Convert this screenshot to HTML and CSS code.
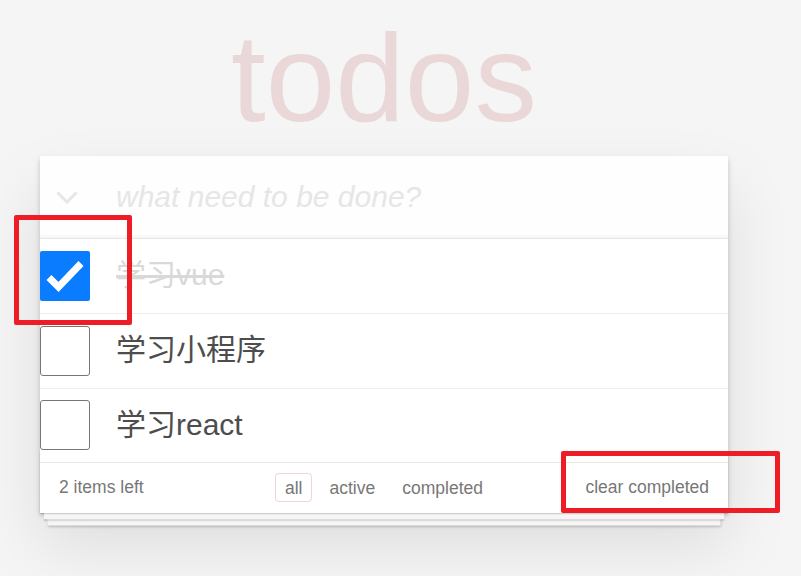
FILE: index.html
```html
<!DOCTYPE html>
<html lang="zh-CN">
<head>
<meta charset="utf-8">
<title>todos</title>
<link rel="stylesheet" href="styles.css">
</head>
<body>
  <h1 class="title">todos</h1>
  <section class="todoapp">
    <header class="header">
      <svg class="toggle-all" width="22" height="13" viewBox="0 0 22 13"><polyline points="1.5,1.5 11,11 20.5,1.5" fill="none" stroke="#e6e6e6" stroke-width="3"/></svg>
      <div class="new-todo">what need to be done?</div>
    </header>
    <ul class="todo-list">
      <li class="todo">
        <span class="check checked">
          <svg width="50" height="50" viewBox="0 0 50 50"><polyline points="9,26.5 18.5,36 41,12.5" fill="none" stroke="#fff" stroke-width="7"/></svg>
        </span>
        <span class="label done">学习vue</span>
      </li>
      <li class="todo">
        <span class="check"></span>
        <span class="label">学习小程序</span>
      </li>
      <li class="todo last">
        <span class="check"></span>
        <span class="label">学习react</span>
      </li>
    </ul>
    <footer class="footer">
      <span class="count">2 items left</span>
      <ul class="filters">
        <li><a class="filter selected">all</a></li>
        <li><a class="filter">active</a></li>
        <li><a class="filter">completed</a></li>
      </ul>
      <span class="clear">clear completed</span>
    </footer>
  </section>
  <div class="mark mark-check"></div>
  <div class="mark mark-clear"></div>
</body>
</html>
```
FILE: styles.css
```css
* { box-sizing: border-box; }
html, body { margin: 0; padding: 0; }
body {
  background: #f5f5f5;
  font-family: "Liberation Sans", Arial, "Noto Sans CJK SC", sans-serif;
  color: #4d4d4d;
  height: 576px;
  overflow: hidden;
}
.title {
  width: 688px;
  margin: 15px 0 0 40px;
  font-size: 125px;
  line-height: 125px;
  font-weight: 400;
  text-align: center;
  color: rgba(175, 47, 47, 0.15);
}
.todoapp {
  position: relative;
  width: 688px;
  margin: 16px 0 0 40px;
  background: #fff;
  box-shadow: 0 2.5px 5px 0 rgba(0, 0, 0, 0.2), 0 31px 62px 0 rgba(0, 0, 0, 0.1);
}
.header {
  display: flex;
  align-items: center;
  height: 82px;
  padding-left: 16px;
  background: rgba(0, 0, 0, 0.003);
  box-shadow: inset 0 -2.5px 1.25px rgba(0, 0, 0, 0.03);
}
.toggle-all { display: block; flex: none; }
.new-todo {
  margin-left: 38px;
  font-size: 30px;
  font-style: italic;
  color: #e6e6e6;
}
.todo-list {
  list-style: none;
  margin: 0;
  padding: 0;
  border-top: 1px solid #e6e6e6;
}
.todo {
  display: flex;
  align-items: center;
  height: 74.75px;
  border-bottom: 1px solid #ededed;
}
.todo.last { border-bottom: none; height: 73.5px; }
.check {
  flex: none;
  width: 50px;
  height: 50px;
  border: 1px solid #767676;
  border-radius: 3px;
  background: #fff;
}
.check.checked {
  border: none;
  background: #0a7cff;
  border-radius: 2px;
}
.check svg { display: block; }
.label {
  margin-left: 26px;
  margin-top: -7px;
  font-size: 30px;
  color: #4d4d4d;
  font-family: "Liberation Sans", Arial, "Noto Sans CJK SC", sans-serif;
}
.label.done {
  color: #d9d9d9;
  text-decoration: line-through;
}
.footer {
  position: relative;
  display: grid;
  grid-template-columns: 1fr auto 1fr;
  align-items: center;
  height: 51px;
  padding: 0 19px 1px;
  border-top: 1px solid #e6e6e6;
  color: #777;
  font-size: 17.5px;
}
.footer::before {
  content: "";
  position: absolute;
  left: 0;
  right: 0;
  bottom: 0;
  height: 62px;
  box-shadow: 0 1.25px 1.25px rgba(0, 0, 0, 0.2),
    0 10px 0 -3.75px #f6f6f6,
    0 11.25px 1.25px -3.75px rgba(0, 0, 0, 0.2),
    0 20px 0 -7.5px #f6f6f6,
    0 21.25px 2.5px -7.5px rgba(0, 0, 0, 0.2);
  pointer-events: none;
}
.count { justify-self: start; }
.filters {
  display: flex;
  list-style: none;
  margin: 0;
  padding: 0;
}
.filter {
  display: inline-block;
  margin: 0 3.75px;
  padding: 3.75px 8.75px;
  line-height: 20px;
  border: 1px solid transparent;
  border-radius: 3.75px;
  color: inherit;
}
.filter.selected { border-color: rgba(175, 47, 47, 0.2); }
.clear { justify-self: end; }
.mark {
  position: absolute;
  border: 5px solid #ee1c25;
  border-radius: 2px;
}
.mark-check { left: 14px; top: 215px; width: 118px; height: 110px; }
.mark-clear { left: 561px; top: 451px; width: 219px; height: 62px; }
```
